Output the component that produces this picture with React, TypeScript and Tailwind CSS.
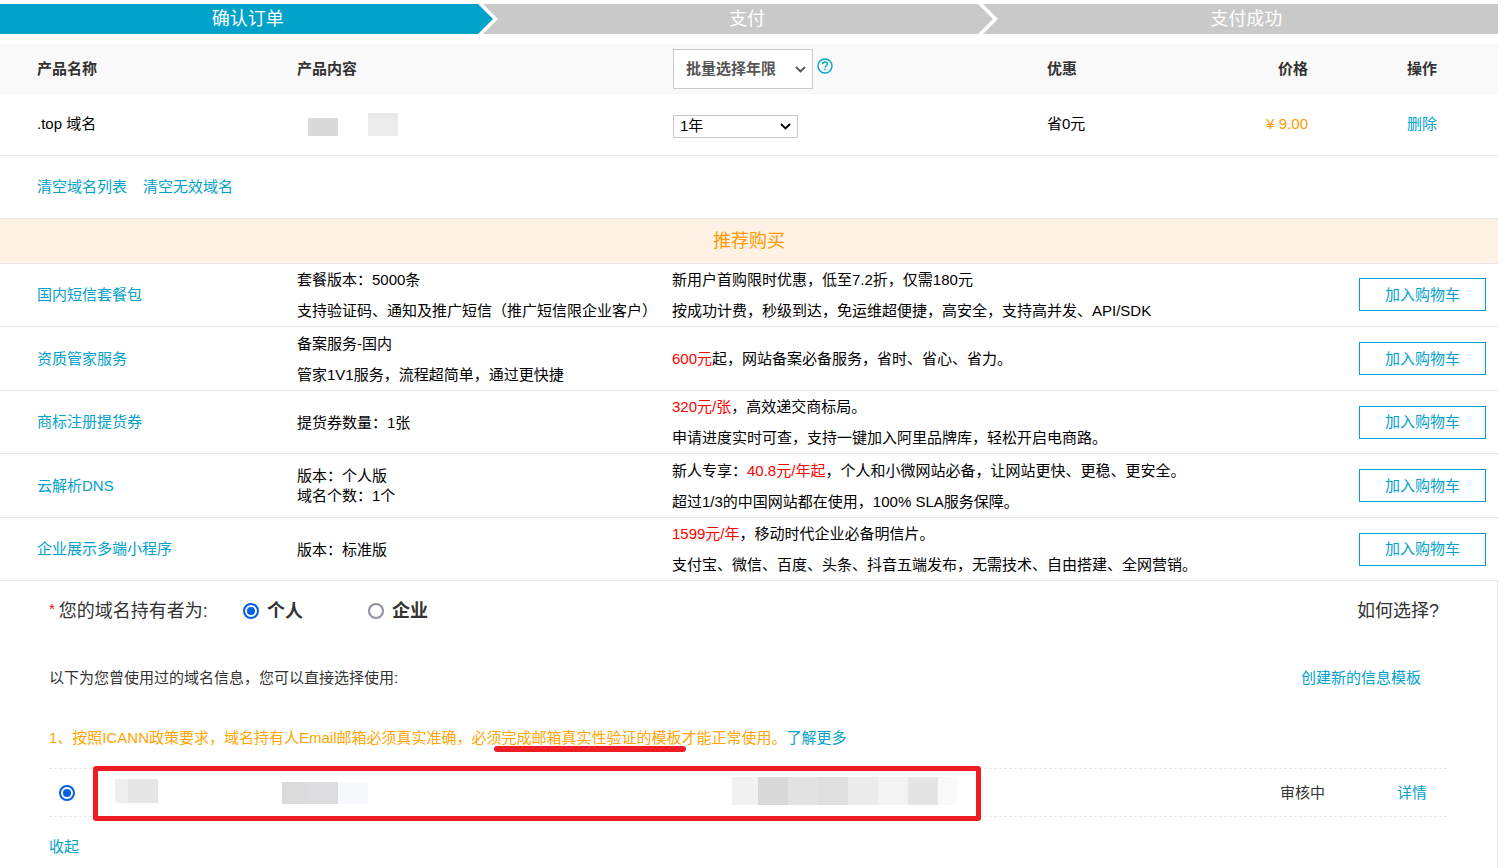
import { useState } from "react"
import type { ReactNode } from "react"

const steps = ["确认订单", "支付", "支付成功"]

type Product = {
  name: string
  content: string[]
  compact?: boolean
  desc: ReactNode[]
}

const products: Product[] = [
  {
    name: "国内短信套餐包",
    content: ["套餐版本：5000条", "支持验证码、通知及推广短信（推广短信限企业客户）"],
    desc: ["新用户首购限时优惠，低至7.2折，仅需180元", "按成功计费，秒级到达，免运维超便捷，高安全，支持高并发、API/SDK"],
  },
  {
    name: "资质管家服务",
    content: ["备案服务-国内", "管家1V1服务，流程超简单，通过更快捷"],
    desc: [
      <>
        <span className="text-[#ff0000]">600元</span>起，网站备案必备服务，省时、省心、省力。
      </>,
    ],
  },
  {
    name: "商标注册提货券",
    content: ["提货券数量：1张"],
    desc: [
      <>
        <span className="text-[#ff0000]">320元/张</span>，高效递交商标局。
      </>,
      "申请进度实时可查，支持一键加入阿里品牌库，轻松开启电商路。",
    ],
  },
  {
    name: "云解析DNS",
    content: ["版本：个人版", "域名个数：1个"],
    compact: true,
    desc: [
      <>
        新人专享：<span className="text-[#ff0000]">40.8元/年起</span>，个人和小微网站必备，让网站更快、更稳、更安全。
      </>,
      "超过1/3的中国网站都在使用，100% SLA服务保障。",
    ],
  },
  {
    name: "企业展示多端小程序",
    content: ["版本：标准版"],
    desc: [
      <>
        <span className="text-[#ff0000]">1599元/年</span>，移动时代企业必备明信片。
      </>,
      "支付宝、微信、百度、头条、抖音五端发布，无需技术、自由搭建、全网营销。",
    ],
  },
]

const radioClass =
  "h-4 w-4 shrink-0 appearance-none rounded-full border-2 border-[#8f8f9d] bg-white bg-clip-content p-[2px] checked:border-[#0060df] checked:bg-[#0060df]"

function StepArrow({ active }: { active: boolean }) {
  return (
    <svg className="absolute right-0 top-0 h-full w-[21px]" viewBox="0 0 21 30" aria-hidden="true">
      <rect width="21" height="30" fill="#c9c9c9" />
      <path d="M0 0H5L20 15L5 30H0Z" fill="#fff" />
      <path d="M0 0L15 15L0 30Z" fill={active ? "#00a2ca" : "#c9c9c9"} />
    </svg>
  )
}

function Chevron({ className }: { className: string }) {
  return (
    <svg className={`pointer-events-none absolute h-[7px] w-[11px] ${className}`} viewBox="0 0 11 7" aria-hidden="true">
      <path d="M1 1L5.5 5.5L10 1" fill="none" stroke="currentColor" strokeWidth="1.8" />
    </svg>
  )
}

export default function App() {
  const [owner, setOwner] = useState("personal")

  return (
    <div className="flex min-h-screen flex-col bg-white pr-[7px] pt-1 font-['Liberation_Sans','Noto_Sans_CJK_SC',sans-serif] text-[15px] leading-5 text-black">
      {/* Steps */}
      <ol className="grid grid-cols-3 text-lg leading-[30px] text-white">
        {steps.map((step, index) => (
          <li key={step} className={`relative pr-1 text-center ${index === 0 ? "bg-[#00a2ca]" : "bg-[#c9c9c9]"}`}>
            {step}
            {index < 2 && <StepArrow active={index === 0} />}
          </li>
        ))}
      </ol>

      {/* Order */}
      <table className="mt-[10px] w-full table-fixed text-left">
        <colgroup>
          <col className="w-[297px]" />
          <col className="w-[375px]" />
          <col className="w-[375px]" />
          <col />
          <col className="w-[152px]" />
        </colgroup>
        <thead>
          <tr className="h-[50px] bg-[#f9f9f9] text-[#333]">
            <th className="pl-[37px]">产品名称</th>
            <th>产品内容</th>
            <th className="pl-px">
              <div className="flex items-start gap-1">
                <div className="relative">
                  <select
                    aria-label="批量选择年限"
                    className="block h-10 w-[140px] appearance-none border border-[#c9c9c9] bg-white pl-3 font-bold text-[#555]"
                  >
                    <option>批量选择年限</option>
                  </select>
                  <Chevron className="right-[7px] top-[17px] text-[#555]" />
                </div>
                <svg className="mt-[9px] h-4 w-4" viewBox="0 0 16 16" fill="none" stroke="#00a2ca" strokeWidth="1.4" aria-hidden="true">
                  <circle cx="8" cy="8" r="7" />
                  <path d="M5.6 6.3C5.6 4.8 6.6 4 8 4S10.4 4.9 10.4 6.1C10.4 7.7 8 7.8 8 9.6" />
                  <path d="M8 10.8V12.2" />
                </svg>
              </div>
            </th>
            <th>
              <div className="flex justify-between pr-[38px]">
                <span>优惠</span>
                <span>价格</span>
              </div>
            </th>
            <th className="text-center">操作</th>
          </tr>
        </thead>
        <tbody>
          <tr className="h-[61px] border-b border-[#e6e6e6]">
            <td className="pl-[37px]">.top 域名</td>
            <td>
              <div className="flex items-end gap-[30px] pl-[11px]">
                <div className="h-[18px] w-[30px] bg-[#dadada]" />
                <div className="h-[23px] w-[30px] border-t-[5px] border-[#e9e9e9] bg-[#ededed]" />
              </div>
            </td>
            <td className="pl-px pt-1">
              <div className="relative w-[125px]">
                <select
                  aria-label="年限"
                  className="block h-[23px] w-full appearance-none border border-[#c9c9c9] bg-white pl-[6px] leading-5"
                >
                  <option>1年</option>
                </select>
                <Chevron className="right-[7px] top-[8px] text-black" />
              </div>
            </td>
            <td>
              <div className="flex justify-between pr-[38px]">
                <span>省0元</span>
                <span className="text-[#ff9900]">¥ 9.00</span>
              </div>
            </td>
            <td className="text-center">
              <a href="#" className="text-[#00a2ca]">删除</a>
            </td>
          </tr>
        </tbody>
      </table>

      <div className="flex h-[62px] items-center gap-4 pl-[37px] text-[#00a2ca]">
        <a href="#">清空域名列表</a>
        <a href="#">清空无效域名</a>
      </div>

      {/* Recommended products */}
      <h2 className="border-y border-[#e6e6e6] bg-[#fff2e5] text-center text-lg leading-[44px] text-[#ff9900]">推荐购买</h2>
      <table className="w-full table-fixed text-left">
        <colgroup>
          <col className="w-[297px]" />
          <col className="w-[375px]" />
          <col />
          <col className="w-[139px]" />
        </colgroup>
        <tbody>
          {products.map((product) => (
            <tr key={product.name} className="border-b border-[#e6e6e6] odd:h-[63px] even:h-16">
              <td className="pl-[37px]">
                <a href="#" className="text-[#00a2ca]">{product.name}</a>
              </td>
              <td className={product.compact ? "leading-5" : "leading-[31px]"}>
                {product.content.map((line) => (
                  <p key={line} className="whitespace-nowrap">{line}</p>
                ))}
              </td>
              <td className="leading-[31px]">
                {product.desc.map((line, index) => (
                  <p key={index}>{line}</p>
                ))}
              </td>
              <td>
                <button className="block h-[33px] w-[127px] border border-[#00a2ca] text-[#00a2ca]">加入购物车</button>
              </td>
            </tr>
          ))}
        </tbody>
      </table>

      {/* Domain owner */}
      <section className="flex-1 border-r border-[#e6e6e6] pb-2 pl-[49px] pr-[50px] text-[#333]">
        <div role="radiogroup" aria-labelledby="owner-label" className="flex h-[60px] items-center text-lg">
          <div className="flex w-[194px] gap-1">
            <span className="text-[15px] text-[#ff0000]">*</span>
            <span id="owner-label">您的域名持有者为:</span>
          </div>
          <label className="flex w-[125px] items-center gap-2 font-bold">
            <input type="radio" name="owner" className={radioClass} checked={owner === "personal"} onChange={() => setOwner("personal")} />
            个人
          </label>
          <label className="flex items-center gap-2 font-bold">
            <input type="radio" name="owner" className={radioClass} checked={owner === "company"} onChange={() => setOwner("company")} />
            企业
          </label>
          <a href="#" className="ml-auto mr-2">如何选择?</a>
        </div>

        <div className="mt-[27px] flex justify-between pr-[26px]">
          <p>以下为您曾使用过的域名信息，您可以直接选择使用:</p>
          <a href="#" className="text-[#00a2ca]">创建新的信息模板</a>
        </div>

        <p className="mt-10 text-[#ffa500]">
          1、按照ICANN政策要求，域名持有人Email邮箱必须真实准确，必须
          <span className="relative">
            完成邮箱真实性验证的模板
            <span className="absolute -left-2 -right-1 top-full h-[6px] rounded-full bg-[#ee1c24]" />
          </span>
          才能正常使用。
          <a href="#" className="text-[#00a2ca]">了解更多</a>
        </p>

        <div className="relative mt-5 flex h-[49px] items-center border-y border-dashed border-[#e9e9e9]">
          <input type="radio" name="template" aria-label="信息模板" className={`ml-[10px] ${radioClass}`} defaultChecked />
          <div className="ml-10 mt-[10px] flex h-6 w-[167px] self-start">
            <div className="w-[13px] bg-[#efefef]" />
            <div className="w-[30px] bg-[#e6e6e6]" />
          </div>
          <div className="flex h-[22px] w-[450px]">
            <div className="w-[26px] bg-[#dbdbdb]" />
            <div className="w-[30px] bg-[#dddddf]" />
            <div className="w-[30px] bg-[#f7f8fb]" />
          </div>
          <div className="mt-2 flex h-7 self-start">
            <div className="w-[26px] bg-[#f1f1f1]" />
            <div className="w-[30px] bg-[#d9d9d9]" />
            <div className="w-[30px] bg-[#e2e2e2]" />
            <div className="w-[30px] bg-[#dfdfdf]" />
            <div className="w-[30px] bg-[#ebebeb]" />
            <div className="w-[30px] bg-[#f3f3f3]" />
            <div className="w-[30px] bg-[#e5e5e5]" />
            <div className="w-[19px] bg-[#f9f9f9]" />
          </div>
          <span className="ml-auto w-[117px]">审核中</span>
          <a href="#" className="mr-5 text-[#00a2ca]">详情</a>
          {/* Highlight frame */}
          <div className="pointer-events-none absolute -bottom-[5px] -top-[3px] left-11 w-[888px] rounded-[3px] border-[5px] border-[#ee1c24]" />
        </div>

        <a href="#" className="mt-5 inline-block text-[#00a2ca]">收起</a>
      </section>
    </div>
  )
}
